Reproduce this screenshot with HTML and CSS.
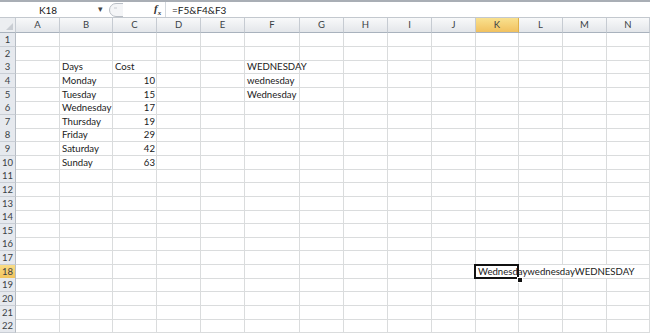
FILE: index.html
```html
<!DOCTYPE html>
<html lang="en">
  <head>
    <meta charset="UTF-8" />
    <meta name="viewport" content="width=device-width, initial-scale=1.0" />
    <title>Book1 - Excel</title>
    <link rel="stylesheet" href="styles.css">
  </head>
  <body>
    <div class="formula-bar">
      <div class="name-box">
        <span class="ref">K18</span>
        <span class="drop">&#9662;</span>
      </div>
      <div class="fx-group">
        <svg class="pill" width="16" height="14" viewBox="0 0 16 14">
          <path d="M15 0.5 H8 A6.5 6.5 0 0 0 8 13.5 H15" fill="#f4f5f7" stroke="#b9bec5" />
          <path d="M6 5 h3" stroke="#c8ccd2" />
        </svg>
        <span class="fx">f<sub>x</sub></span>
      </div>
      <div class="formula">=F5&amp;F4&amp;F3</div>
    </div>

    <div class="sheet">
      <div class="row head">
        <div class="corner"></div>
        <div>A</div><div>B</div><div>C</div><div>D</div><div>E</div><div>F</div><div>G</div>
        <div>H</div><div>I</div><div>J</div><div class="on">K</div><div>L</div><div>M</div><div>N</div>
      </div>

      <div class="row"><div class="rh">1</div><div></div><div></div><div></div><div></div><div></div><div></div><div></div><div></div><div></div><div></div><div></div><div></div><div></div><div></div></div>
      <div class="row"><div class="rh">2</div><div></div><div></div><div></div><div></div><div></div><div></div><div></div><div></div><div></div><div></div><div></div><div></div><div></div><div></div></div>
      <div class="row"><div class="rh">3</div><div></div><div>Days</div><div>Cost</div><div></div><div></div><div>WEDNESDAY</div><div></div><div></div><div></div><div></div><div></div><div></div><div></div><div></div></div>
      <div class="row"><div class="rh">4</div><div></div><div>Monday</div><div class="num">10</div><div></div><div></div><div>wednesday</div><div></div><div></div><div></div><div></div><div></div><div></div><div></div><div></div></div>
      <div class="row"><div class="rh">5</div><div></div><div>Tuesday</div><div class="num">15</div><div></div><div></div><div>Wednesday</div><div></div><div></div><div></div><div></div><div></div><div></div><div></div><div></div></div>
      <div class="row"><div class="rh">6</div><div></div><div>Wednesday</div><div class="num">17</div><div></div><div></div><div></div><div></div><div></div><div></div><div></div><div></div><div></div><div></div><div></div></div>
      <div class="row"><div class="rh">7</div><div></div><div>Thursday</div><div class="num">19</div><div></div><div></div><div></div><div></div><div></div><div></div><div></div><div></div><div></div><div></div><div></div></div>
      <div class="row"><div class="rh">8</div><div></div><div>Friday</div><div class="num">29</div><div></div><div></div><div></div><div></div><div></div><div></div><div></div><div></div><div></div><div></div><div></div></div>
      <div class="row"><div class="rh">9</div><div></div><div>Saturday</div><div class="num">42</div><div></div><div></div><div></div><div></div><div></div><div></div><div></div><div></div><div></div><div></div><div></div></div>
      <div class="row"><div class="rh">10</div><div></div><div>Sunday</div><div class="num">63</div><div></div><div></div><div></div><div></div><div></div><div></div><div></div><div></div><div></div><div></div><div></div></div>
      <div class="row"><div class="rh">11</div><div></div><div></div><div></div><div></div><div></div><div></div><div></div><div></div><div></div><div></div><div></div><div></div><div></div><div></div></div>
      <div class="row"><div class="rh">12</div><div></div><div></div><div></div><div></div><div></div><div></div><div></div><div></div><div></div><div></div><div></div><div></div><div></div><div></div></div>
      <div class="row"><div class="rh">13</div><div></div><div></div><div></div><div></div><div></div><div></div><div></div><div></div><div></div><div></div><div></div><div></div><div></div><div></div></div>
      <div class="row"><div class="rh">14</div><div></div><div></div><div></div><div></div><div></div><div></div><div></div><div></div><div></div><div></div><div></div><div></div><div></div><div></div></div>
      <div class="row"><div class="rh">15</div><div></div><div></div><div></div><div></div><div></div><div></div><div></div><div></div><div></div><div></div><div></div><div></div><div></div><div></div></div>
      <div class="row"><div class="rh">16</div><div></div><div></div><div></div><div></div><div></div><div></div><div></div><div></div><div></div><div></div><div></div><div></div><div></div><div></div></div>
      <div class="row"><div class="rh">17</div><div></div><div></div><div></div><div></div><div></div><div></div><div></div><div></div><div></div><div></div><div></div><div></div><div></div><div></div></div>
      <div class="row"><div class="rh on">18</div><div></div><div></div><div></div><div></div><div></div><div></div><div></div><div></div><div></div><div></div><div class="active">WednesdaywednesdayWEDNESDAY</div><div class="spill"></div><div class="spill"></div><div></div></div>
      <div class="row"><div class="rh">19</div><div></div><div></div><div></div><div></div><div></div><div></div><div></div><div></div><div></div><div></div><div></div><div></div><div></div><div></div></div>
      <div class="row"><div class="rh">20</div><div></div><div></div><div></div><div></div><div></div><div></div><div></div><div></div><div></div><div></div><div></div><div></div><div></div><div></div></div>
      <div class="row"><div class="rh">21</div><div></div><div></div><div></div><div></div><div></div><div></div><div></div><div></div><div></div><div></div><div></div><div></div><div></div><div></div></div>
      <div class="row"><div class="rh">22</div><div></div><div></div><div></div><div></div><div></div><div></div><div></div><div></div><div></div><div></div><div></div><div></div><div></div><div></div></div>
    </div>
  </body>
</html>
```

FILE: styles.css
```css
body {
  margin: 0;
  font-family: Lato, "Liberation Sans", sans-serif;
  font-size: 9.6px;
  color: #1a1a1a;
  background: #fff;
  overflow: hidden;
}

/* formula bar */

.formula-bar {
  display: flex;
  height: 18px;
  box-sizing: border-box;
  border-top: 2px solid #a9aeb5;
  border-bottom: 1px solid #c3c8ce;
  align-items: center;
  font-size: 10px;
}

.name-box {
  position: relative;
  width: 106px;
  height: 100%;
  display: flex;
  align-items: center;
  justify-content: center;
}

.name-box .ref {
  margin-left: -10px;
}

.drop {
  position: absolute;
  right: 3px;
  top: 1px;
  font-size: 9px;
  color: #444;
}

.fx-group {
  display: flex;
  align-items: center;
  width: 60px;
  height: 100%;
  border-right: 1px solid #d4d8dd;
  box-sizing: border-box;
}

.pill {
  margin-left: 2px;
}

.fx {
  margin-left: 30px;
  font-family: "Liberation Serif", serif;
  font-style: italic;
  font-weight: bold;
  font-size: 11px;
  color: #333;
}

.fx sub {
  font-size: 7px;
}

.formula {
  padding-left: 6px;
}

/* sheet grid */

.sheet {
  position: relative;
}

.row {
  display: grid;
  grid-template-columns: 16px 44px 53px 44px 44px 44px 55px 44px 44px 44px 44px 43px 44px 44px 1fr;
  height: 13.64px;
}

.row > div {
  box-sizing: border-box;
  border-right: 1px solid #dadcdd;
  border-bottom: 1px solid #dadcdd;
  padding: 0 2px;
  line-height: 13px;
  white-space: nowrap;
}

.row .num {
  text-align: right;
  padding-right: 1px;
}

.row .rh {
  background: #e6e9ee;
  border-right: 1px solid #b6bcc4;
  border-bottom: 1px solid #c9ced5;
  text-align: center;
  padding: 0;
  color: #3a3f45;
  font-size: 9.5px;
}

.row .rh.on {
  background: linear-gradient(#f9dd86, #f1c35e);
  border-bottom-color: #e0b24a;
}

.row.head {
  height: 15px;
}

.row.head > div {
  background: linear-gradient(#f8f9fa, #e3e6ea);
  border-right: 1px solid #c6cbd2;
  border-bottom: 1px solid #a9b2bd;
  text-align: center;
  line-height: 14px;
  color: #3a3f45;
  font-size: 9.5px;
}

.row.head > div.on {
  background: linear-gradient(#f9e18f, #f1c15f);
  border-right-color: #e0b24a;
}

.row.head .corner {
  position: relative;
  background: #eceef1;
}

.corner::after {
  content: "";
  position: absolute;
  right: 2px;
  bottom: 2px;
  border-left: 7px solid transparent;
  border-bottom: 7px solid #c9cdd3;
}

.row .active {
  position: relative;
  border-right: none;
}

.active::after {
  content: "";
  position: absolute;
  left: -2px;
  top: -1px;
  width: 45px;
  height: 15px;
  box-sizing: border-box;
  border: 2px solid #111;
}

.active::before {
  content: "";
  position: absolute;
  left: 41px;
  top: 12px;
  width: 4px;
  height: 4px;
  background: #111;
  border: 1px solid #fff;
  z-index: 1;
}

.row .spill {
  border-right: none;
}
```
